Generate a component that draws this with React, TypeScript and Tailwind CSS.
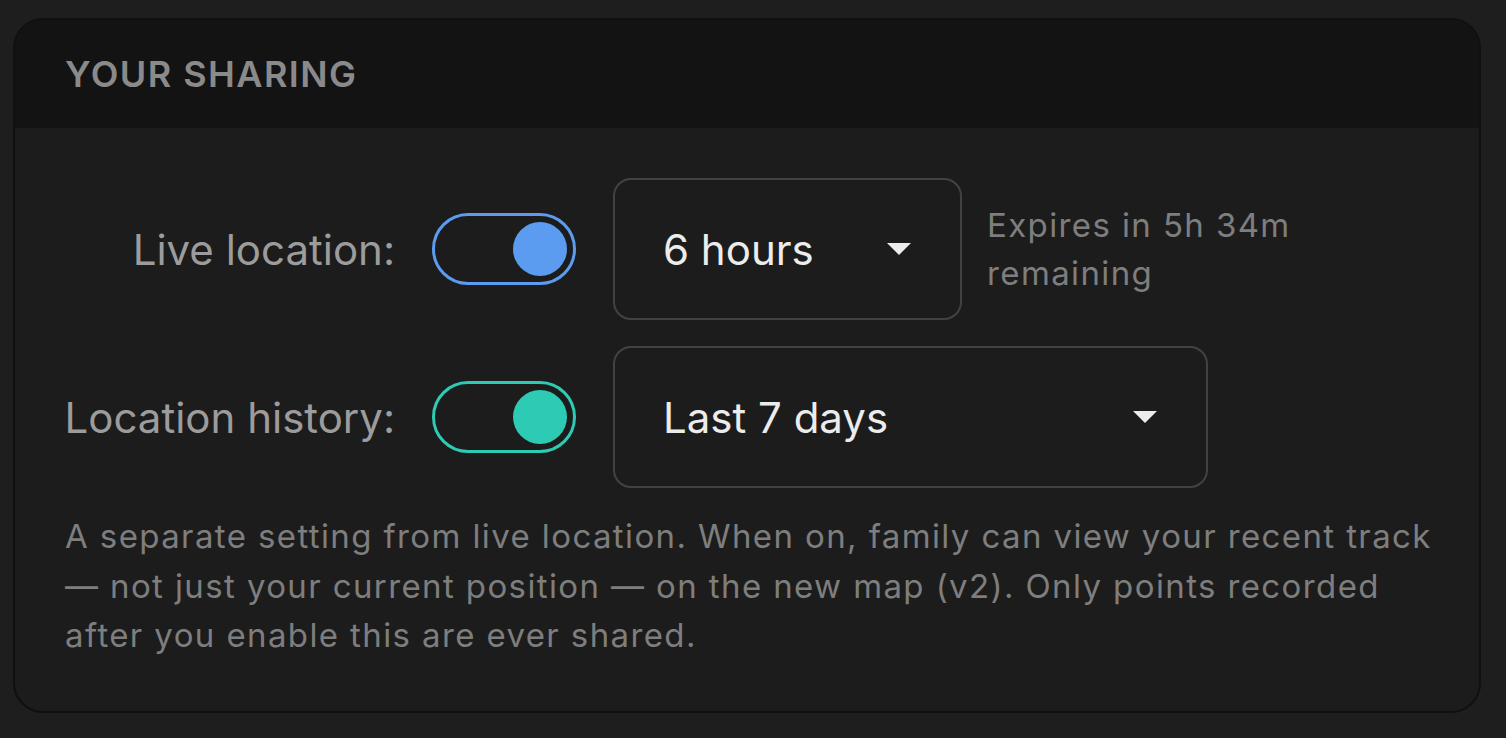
import React from "react";

const Toggle = ({ color }: { color: "blue" | "teal" }) => {
  const border = color === "blue" ? "border-[#5b9cf0]" : "border-[#2ecbb4]";
  const knob = color === "blue" ? "bg-[#5b9cf0]" : "bg-[#2ecbb4]";
  return (
    <button
      className={`flex h-[72px] w-[144px] items-center justify-end rounded-full border-[3px] ${border} px-[6px]`}
    >
      <span className={`block h-[54px] w-[54px] rounded-full ${knob}`} />
    </button>
  );
};

const Select = ({ value, width }: { value: string; width: string }) => (
  <div
    className={`flex h-[142px] ${width} items-center justify-between rounded-[18px] border-2 border-[#424242] pl-[48px] pr-[48px]`}
  >
    <span className="whitespace-nowrap text-[42px] text-[#ececec]">{value}</span>
    <svg width="26" height="14" viewBox="0 0 26 14" className="shrink-0">
      <path d="M1 1 L25 1 L13 13 Z" fill="#ececec" />
    </svg>
  </div>
);

export default function App() {
  return (
    <div
      className="min-h-screen bg-[#1e1e1e] pl-[13px] pr-[25px] pt-[18px]"
      style={{ fontFamily: "Inter, 'Noto Sans', sans-serif" }}
    >
      <section className="overflow-hidden rounded-[30px] border-2 border-[#101010] bg-[#1c1c1c]">
        <header className="flex h-[108px] items-center bg-[#131313] px-[50px]">
          <h2 className="text-[36px] font-semibold tracking-[0.04em] text-[#8a8a8a]">
            YOUR SHARING
          </h2>
        </header>

        <div className="pb-[50px] pl-[50px] pr-[36px] pt-[50px]">
          <div className="grid grid-cols-[330px_max-content_1fr] items-center gap-x-[37px] gap-y-[26px]">
            <span className="justify-self-end whitespace-nowrap text-[42px] text-[#9c9c9c]">
              Live location:
            </span>
            <Toggle color="blue" />
            <div className="flex items-center gap-[25px]">
              <Select value="6 hours" width="w-[349px]" />
              <p className="text-[33px] leading-[48px] tracking-[0.042em] text-[#7e7e7e]">
                Expires in 5h 34m
                <br />
                remaining
              </p>
            </div>

            <span className="justify-self-end whitespace-nowrap text-[42px] text-[#9c9c9c]">
              Location history:
            </span>
            <Toggle color="teal" />
            <div className="flex">
              <Select value="Last 7 days" width="w-[595px]" />
            </div>
          </div>

          <p className="mt-[24px] text-[33px] leading-[49.5px] tracking-[0.042em] text-[#7e7e7e]">
            A separate setting from live location. When on, family can view your
            recent track — not just your current position — on the new map (v2).
            Only points recorded after you enable this are ever shared.
          </p>
        </div>
      </section>
    </div>
  );
}
